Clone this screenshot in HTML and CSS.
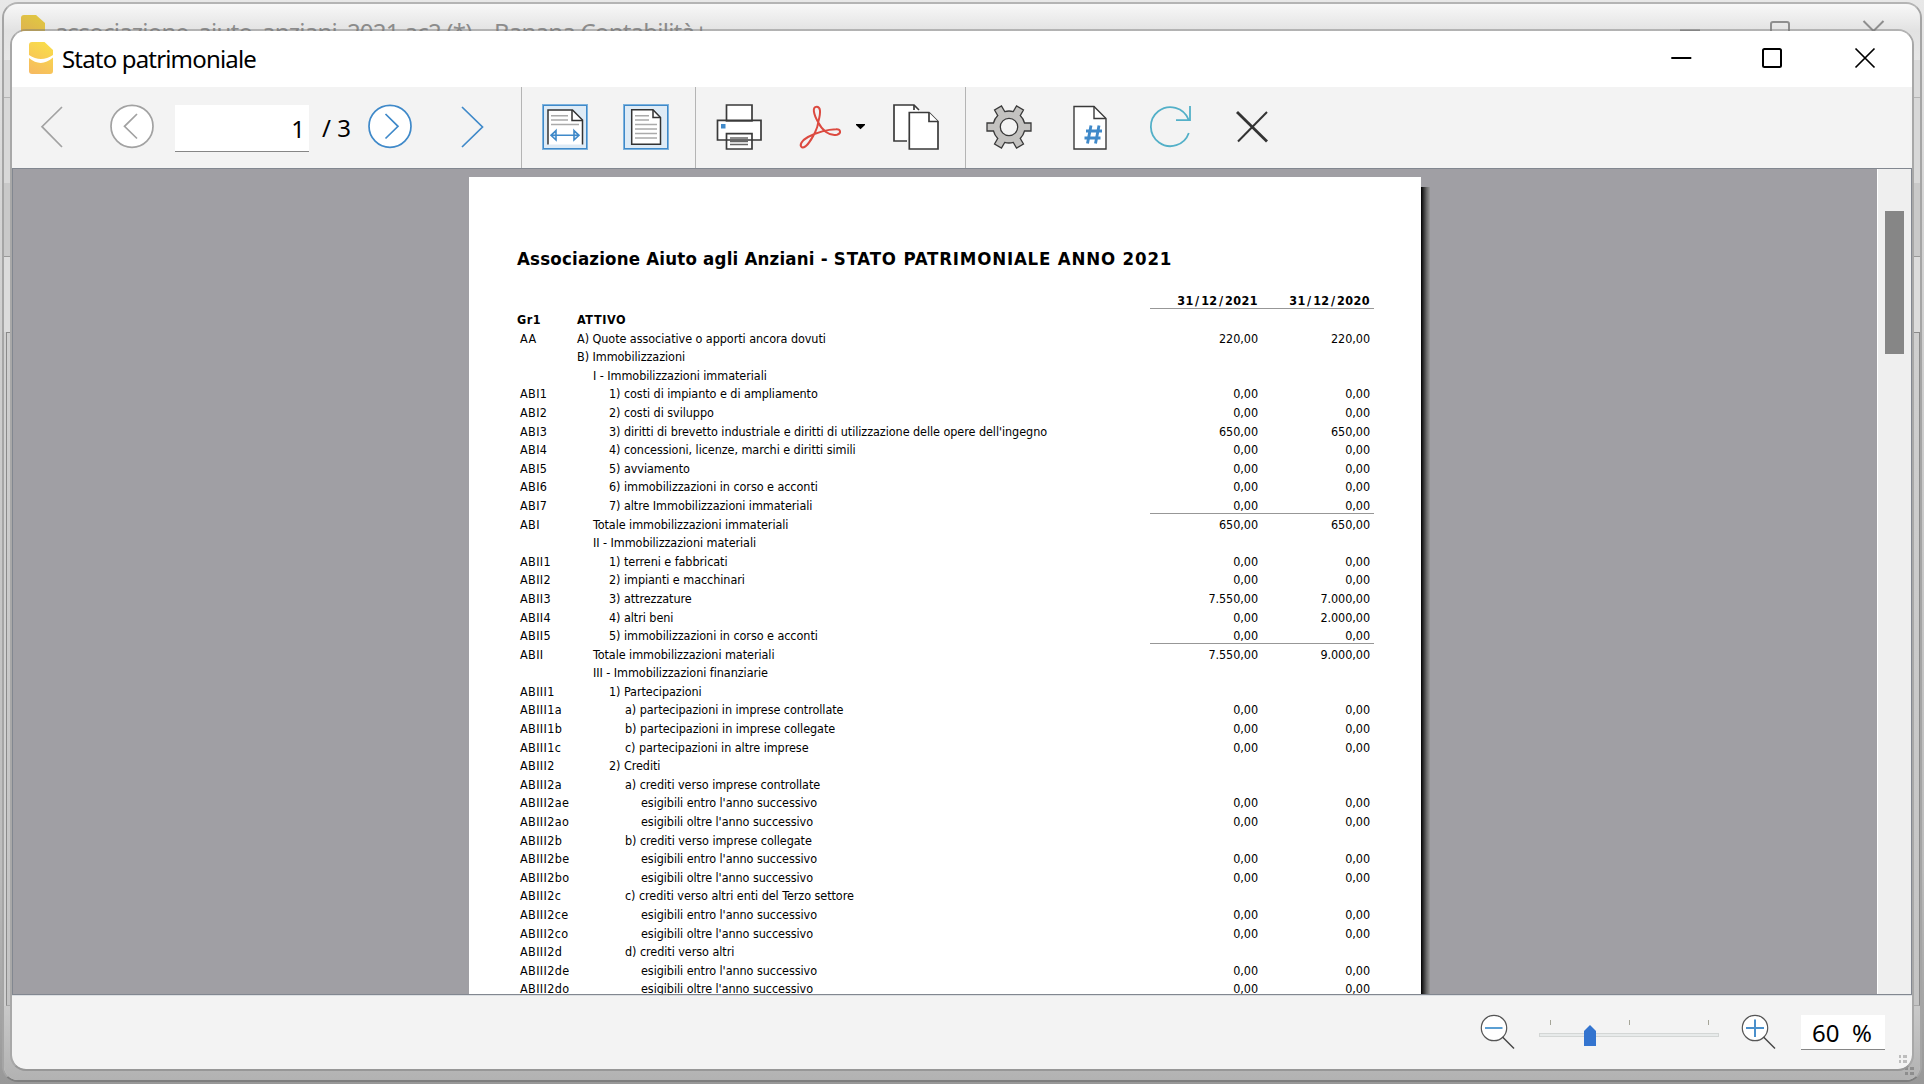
FILE: index.html
```html
<!DOCTYPE html>
<html lang="it">
<head>
<meta charset="utf-8">
<title>Stato patrimoniale</title>
<link rel="stylesheet" href="styles.css">
</head>
<body>
<div class="desktop">
  <div class="back-window">
    <div class="back-title">
      <svg class="back-logo" width="24" height="32" viewBox="0 0 24 32"><path fill="url(#gold)" d="M3 0H15L24 8V29Q24 32 21 32H3Q0 32 0 29V3Q0 0 3 0Z"/></svg>
      <span class="back-text">associazione_aiuto_anziani_2021.ac2 (*) – Banana Contabilità+</span>
      <svg class="back-controls" width="230" height="27" viewBox="1670 4 230 27" fill="none" stroke="#8e8e8e" stroke-width="2"><path d="M1678 30.500H1698M1861.500 21L1871.500 31L1881.500 21"/><rect x="1769" y="22" width="18" height="18" rx="2"/></svg>
    </div>
    <div class="back-menu"></div>
    <div class="back-tools"></div>
    <div class="back-tabs"></div>
    <div class="back-pane"></div>
    <div class="back-table"></div>
    <div class="back-status"><svg width="10" height="10" viewBox="0 0 10 10" fill="#8d8d8d"><path d="M0 1h3v3H0zM5 1h4v3H5zM0 6h3v3H0zM5 6h4v3H5z"/></svg></div>
  </div>

  <main class="window">
    <header class="titlebar">
      <svg class="logo" width="24" height="32" viewBox="0 0 24 32">
        <defs><linearGradient id="gold" x1="0.6" y1="0" x2="0.2" y2="1"><stop offset="0" stop-color="#f9dc4a"/><stop offset="1" stop-color="#f6ba60"/></linearGradient></defs>
        <path fill="url(#gold)" d="M3 0H15.500L24 8V29Q24 32 21 32H3Q0 32 0 29V3Q0 0 3 0Z"/>
        <path fill="#fff" d="M0 13Q12 21 24 13V15.500Q12 26 0 16Z"/>
      </svg>
      <h1 class="caption">Stato patrimoniale</h1>
      <svg class="controls" width="220" height="56" viewBox="1660 31 220 56" fill="none" stroke="#000" stroke-width="2"><path d="M1670.300 58H1690.300"/><rect x="1762" y="49" width="18" height="18" rx="1.500"/><path stroke-width="1.700" d="M1854.500 48.500L1873.500 67.500M1873.500 48.500L1854.500 67.500"/></svg>
    </header>

    <nav class="toolbar">
      <svg class="tb first" viewBox="29 87 46 81"><path class="g" d="M62 107L42 126.700L62 147"/></svg>
      <svg class="tb prev" viewBox="109 87 46 81"><circle class="g" fill="#fff" cx="132" cy="126.300" r="21"/><path class="g" d="M137 114L124.500 126.300L137 138.500"/></svg>
      <input class="page-input" value="1">
      <span class="page-total">/ 3</span>
      <svg class="tb next" viewBox="367 87 46 81"><circle class="b" fill="#fff" cx="390" cy="126.300" r="21"/><path class="b" d="M385.500 114L398 126.300L385.500 138.500"/></svg>
      <svg class="tb last" viewBox="449 87 46 81"><path class="b" d="M462 107L482.500 127L462 147"/></svg>
      <i class="sep s1"></i>
      <svg class="tb fitw" viewBox="542 87 46 81">
        <rect x="543" y="105" width="44" height="44" fill="#deebf6" stroke="#7db2dd" stroke-width="2"/><rect x="543.500" y="105.500" width="43" height="43" fill="none" stroke="#3f89c9"/>
        <path d="M548 144.500V110H572.500L582.500 120V144.500" fill="#fff" stroke="#333" stroke-width="1.500"/><path d="M572 110V120.500H582.500" fill="none" stroke="#333" stroke-width="1.500"/>
        <path d="M551 115.700H568M551 120H568M551 124.500H579" stroke="#aaa" stroke-width="1.500"/>
        <path d="M552 135.300H578M556 130.500L551 135.300L556 140ZM574 130.500L579 135.300L574 140Z" fill="#deebf6" stroke="#3f89c9" stroke-width="1.600"/>
      </svg>
      <svg class="tb fitp" viewBox="623 87 46 81">
        <rect x="624" y="105" width="44" height="44" fill="#deebf6" stroke="#7db2dd" stroke-width="2"/><rect x="624.500" y="105.500" width="43" height="43" fill="none" stroke="#3f89c9"/>
        <path d="M631.700 109.700H653L660.500 117.500V144.300H631.700Z" fill="#fff" stroke="#333" stroke-width="1.500"/><path d="M653 110V117.500H660.500" fill="none" stroke="#333" stroke-width="1.500"/>
        <path d="M635 115.700H649M635 120H649M635 124.500H657M635 129H657M635 133.500H657M635 138H657" stroke="#aaa" stroke-width="1.500"/>
      </svg>
      <i class="sep s2"></i>
      <svg class="tb print" viewBox="716 87 46 81" stroke="#3a3a3a" stroke-width="1.700">
        <path d="M726.500 105H752V121H726.500ZM717.500 120.300H761V140H717.500ZM726.500 133.700H752V149H726.500Z"/><path d="M730 138H748M730 141.300H748M730 144.500H748" stroke="#666"/><path d="M721 124h4.500v4.500H721z" fill="#3f89c9" stroke="none"/>
      </svg>
      <svg class="tb pdf" viewBox="798 87 46 81"><path fill="none" stroke="#dc4a40" stroke-width="2" d="M818.500 121C821 112 820.500 106.700 816.700 106.700C812 106.700 813.500 114 818 122C822 130 829 136.500 837 134.800C841.500 133.500 841 129 836 129.300C829 129.500 817 132.500 808 137C801.500 140.500 799 145.500 802 147.300C806 149 812.500 137.500 815 132.500C817 128.500 818 125 818.500 121Z"/></svg>
      <svg class="tb caret" viewBox="856 87 9 81"><path d="M856 124H865V125L860.500 129.300L856 125Z"/></svg>
      <svg class="tb copy" viewBox="893 87 46 81" stroke="#3a3a3a" stroke-width="1.700">
        <path d="M907 141H894V105H914L919 110" /><path d="M914 105V110"/><path d="M909.300 112.500H929L938 121.500V149H909.300Z"/><path d="M929 112.500V121.500H938"/>
      </svg>
      <i class="sep s3"></i>
      <svg class="tb gear" viewBox="986 87 46 81"><g transform="translate(1009 127)" fill="#c3c2c0" stroke="#3a3a3a" stroke-width="1.300"><path d="M15.500 -4L22 -4V4H15.500A16 16 0 0 1 11.210 11.420L14.460 17.050L7.540 21.050L4.290 15.420A16 16 0 0 1 -4.290 15.420L-7.540 21.050L-14.460 17.050L-11.210 11.420A16 16 0 0 1 -15.500 4H-22V-4H-15.500A16 16 0 0 1 -11.210 -11.420L-14.460 -17.050L-7.540 -21.050L-4.290 -15.420A16 16 0 0 1 4.290 -15.420L7.540 -21.050L14.460 -17.050L11.210 -11.420A16 16 0 0 1 15.500 -4Z"/><circle r="8.700" fill="#f3f3f3"/></g></svg>
      <svg class="tb hash" viewBox="1067 87 46 81"><path d="M1074 106.500H1094L1106 118.500V149H1074Z" fill="#fff" stroke="#3a3a3a" stroke-width="1.400"/><path d="M1094 106.500V118.500H1106" fill="none" stroke="#3a3a3a" stroke-width="1.400"/><path d="M1091 125.500L1087.500 143.500M1099 125.500L1095.500 143.500M1086 131H1102M1084.500 138H1100.500" fill="none" stroke="#3f89c9" stroke-width="2.900"/></svg>
      <svg class="tb refresh" viewBox="1148 87 46 81"><path d="M1188.800 133A19.500 19.500 0 1 1 1188.500 119.500M1190 106V120.200H1176" fill="none" stroke="#53b0c8" stroke-width="1.800"/></svg>
      <svg class="tb close" viewBox="1229 87 46 81"><path d="M1267 112L1238 141.500" stroke="#333" stroke-width="2"/><path d="M1237 112L1267 141.500" stroke="#333" stroke-width="2.800"/></svg>
    </nav>

    <section class="viewport">
      <div class="canvas">
        <div class="sheet-wrap">
        <article class="sheet">
          <h2 class="doc-title">Associazione Aiuto agli Anziani - <span class="doc-kind">STATO PATRIMONIALE ANNO 2021</span></h2>
          <div class="row head"><span></span><span></span><b>31<i>/</i>12<i>/</i>2021</b><b>31<i>/</i>12<i>/</i>2020</b></div>
          <div class="row group ruled"><span>Gr1</span><span>ATTIVO</span><b></b><b></b></div>
          <div class="row"><span>AA</span><span>A) Quote associative o apporti ancora dovuti</span><b>220,00</b><b>220,00</b></div>
          <div class="row"><span></span><span>B) Immobilizzazioni</span><b></b><b></b></div>
          <div class="row"><span></span><span class="i1">I - Immobilizzazioni immateriali</span><b></b><b></b></div>
          <div class="row"><span>ABI1</span><span class="i2">1) costi di impianto e di ampliamento</span><b>0,00</b><b>0,00</b></div>
          <div class="row"><span>ABI2</span><span class="i2">2) costi di sviluppo</span><b>0,00</b><b>0,00</b></div>
          <div class="row"><span>ABI3</span><span class="i2">3) diritti di brevetto industriale e diritti di utilizzazione delle opere dell'ingegno</span><b>650,00</b><b>650,00</b></div>
          <div class="row"><span>ABI4</span><span class="i2">4) concessioni, licenze, marchi e diritti simili</span><b>0,00</b><b>0,00</b></div>
          <div class="row"><span>ABI5</span><span class="i2">5) avviamento</span><b>0,00</b><b>0,00</b></div>
          <div class="row"><span>ABI6</span><span class="i2">6) immobilizzazioni in corso e acconti</span><b>0,00</b><b>0,00</b></div>
          <div class="row"><span>ABI7</span><span class="i2">7) altre Immobilizzazioni immateriali</span><b>0,00</b><b>0,00</b></div>
          <div class="row ruled"><span>ABI</span><span class="i1">Totale immobilizzazioni immateriali</span><b>650,00</b><b>650,00</b></div>
          <div class="row"><span></span><span class="i1">II - Immobilizzazioni materiali</span><b></b><b></b></div>
          <div class="row"><span>ABII1</span><span class="i2">1) terreni e fabbricati</span><b>0,00</b><b>0,00</b></div>
          <div class="row"><span>ABII2</span><span class="i2">2) impianti e macchinari</span><b>0,00</b><b>0,00</b></div>
          <div class="row"><span>ABII3</span><span class="i2">3) attrezzature</span><b>7.550,00</b><b>7.000,00</b></div>
          <div class="row"><span>ABII4</span><span class="i2">4) altri beni</span><b>0,00</b><b>2.000,00</b></div>
          <div class="row"><span>ABII5</span><span class="i2">5) immobilizzazioni in corso e acconti</span><b>0,00</b><b>0,00</b></div>
          <div class="row ruled"><span>ABII</span><span class="i1">Totale immobilizzazioni materiali</span><b>7.550,00</b><b>9.000,00</b></div>
          <div class="row"><span></span><span class="i1">III - Immobilizzazioni finanziarie</span><b></b><b></b></div>
          <div class="row"><span>ABIII1</span><span class="i2">1) Partecipazioni</span><b></b><b></b></div>
          <div class="row"><span>ABIII1a</span><span class="i3">a) partecipazioni in imprese controllate</span><b>0,00</b><b>0,00</b></div>
          <div class="row"><span>ABIII1b</span><span class="i3">b) partecipazioni in imprese collegate</span><b>0,00</b><b>0,00</b></div>
          <div class="row"><span>ABIII1c</span><span class="i3">c) partecipazioni in altre imprese</span><b>0,00</b><b>0,00</b></div>
          <div class="row"><span>ABIII2</span><span class="i2">2) Crediti</span><b></b><b></b></div>
          <div class="row"><span>ABIII2a</span><span class="i3">a) crediti verso imprese controllate</span><b></b><b></b></div>
          <div class="row"><span>ABIII2ae</span><span class="i4">esigibili entro l'anno successivo</span><b>0,00</b><b>0,00</b></div>
          <div class="row"><span>ABIII2ao</span><span class="i4">esigibili oltre l'anno successivo</span><b>0,00</b><b>0,00</b></div>
          <div class="row"><span>ABIII2b</span><span class="i3">b) crediti verso imprese collegate</span><b></b><b></b></div>
          <div class="row"><span>ABIII2be</span><span class="i4">esigibili entro l'anno successivo</span><b>0,00</b><b>0,00</b></div>
          <div class="row"><span>ABIII2bo</span><span class="i4">esigibili oltre l'anno successivo</span><b>0,00</b><b>0,00</b></div>
          <div class="row"><span>ABIII2c</span><span class="i3">c) crediti verso altri enti del Terzo settore</span><b></b><b></b></div>
          <div class="row"><span>ABIII2ce</span><span class="i4">esigibili entro l'anno successivo</span><b>0,00</b><b>0,00</b></div>
          <div class="row"><span>ABIII2co</span><span class="i4">esigibili oltre l'anno successivo</span><b>0,00</b><b>0,00</b></div>
          <div class="row"><span>ABIII2d</span><span class="i3">d) crediti verso altri</span><b></b><b></b></div>
          <div class="row"><span>ABIII2de</span><span class="i4">esigibili entro l'anno successivo</span><b>0,00</b><b>0,00</b></div>
          <div class="row"><span>ABIII2do</span><span class="i4">esigibili oltre l'anno successivo</span><b>0,00</b><b>0,00</b></div>
        </article>
        <div class="sheet-shadow"></div>
        </div>
      </div>
      <div class="scrollbar"><div class="thumb"></div></div>
    </section>

    <footer class="zoombar">
      <svg class="zoom-icon" width="36" height="73" viewBox="1480 996 36 73"><circle cx="1494" cy="1028" r="12.700" fill="#fff" stroke="#555" stroke-width="1.200"/><path d="M1502.500 1037L1514 1048.500" stroke="#444" stroke-width="1.400"/><path d="M1485 1028H1502.500" stroke="#5b9fd3" stroke-width="2"/></svg>
      <svg class="slider" width="180" height="73" viewBox="1539 996 180 73"><path d="M1550.500 1020V1025M1629.500 1020V1025M1708.500 1020V1025" stroke="#a5a598"/><rect x="1539.500" y="1033.500" width="179" height="3" fill="#e7eaea" stroke="#d3d6d5"/><path d="M1584 1046V1031L1590 1025L1596 1031V1046Z" fill="#3374cf"/></svg>
      <svg class="zoom-icon plus" width="36" height="73" viewBox="1740 996 36 73"><circle cx="1754" cy="1028" r="12.700" fill="#fff" stroke="#555" stroke-width="1.200"/><path d="M1762.500 1037L1774 1048.500" stroke="#444" stroke-width="1.400"/><path d="M1745 1028H1763M1754 1019.500V1037" stroke="#4a90cc" stroke-width="2"/></svg>
      <div class="percent"><span>60</span><span>%</span></div>
      <svg class="grip" width="10" height="10" viewBox="0 0 10 10" fill="#bdbdbd"><path d="M0 1h2v3H0zM4 1h4v3H4zM0 6h2v3H0zM4 6h4v3H4z"/></svg>
    </footer>
  </main>
</div>
</body>
</html>
```
FILE: styles.css
```css
* { box-sizing: border-box; }
body { margin: 0; width: 1924px; height: 1084px; overflow: hidden; font-family: "Noto Sans", sans-serif; color: #000; }
svg { display: block; flex: none; }
.desktop { position: relative; width: 1924px; height: 1084px; background: linear-gradient(#e8e8e8, #d4d4d4 20%, #bcbcbc 80%, #989898); }

/* main application window behind the preview */
.back-window { position: absolute; left: 2px; top: 2px; width: 1920px; height: 1080px; border: 2px solid #a5a5a5; border-top-color: #b4b4b4; border-bottom-color: #7e7e7e; border-radius: 16px; overflow: hidden; display: flex; flex-direction: column; background: #d0d0d0; }
.back-title { height: 56px; display: flex; align-items: flex-start; padding-left: 17px; background: linear-gradient(#f8f8f8, #e2e2e2 27px, #e6e6e6); flex: none; }
.back-logo { margin-top: 11px; filter: brightness(.9); }
.back-text { margin-left: 10px; margin-top: 10px; font-size: 24px; line-height: 36px; letter-spacing: -0.76px; color: #8c8c8c; white-space: nowrap; }
.back-controls { margin-left: auto; margin-right: 18px; }
.back-menu { height: 38px; background: #dadada; border-bottom: 1px solid #b5b5b5; flex: none; }
.back-tools { height: 85px; background: #d8d8d8; flex: none; }
.back-tabs { height: 74px; background: #c9c9c9; border-bottom: 1px solid #999; flex: none; }
.back-pane { height: 75px; background: #dcdcdc; flex: none; }
.back-table { height: 674px; margin: 0 0 0 2px; border: 1px solid #8a8a8a; border-bottom-color: #a8a8a8; background: linear-gradient(#cfcfcf, #c4c4c4); flex: none; }
.back-status { flex: 1; background: linear-gradient(#c9c9c9, #b2b2b2); display: flex; justify-content: flex-end; align-items: flex-end; padding: 0 5px 4px; }

/* preview window */
.window { position: absolute; left: 10px; top: 29px; width: 1904px; height: 1042px; border: 2px solid #a8a8a8; border-top-color: rgba(120, 120, 120, .45); border-bottom-color: #979797; border-radius: 16px; overflow: hidden; display: flex; flex-direction: column; background: #f3f3f3; background-clip: padding-box; }
.titlebar { height: 56px; flex: none; background: #fff; display: flex; align-items: center; padding: 0 31px 0 17px; }
.logo { margin-top: -2px; }
.caption { margin: 0 0 0 9px; font-size: 24px; font-weight: 400; line-height: 56px; letter-spacing: -0.83px; }
.controls { margin-left: auto; }

.toolbar { height: 81px; flex: none; display: flex; align-items: center; padding-left: 17px; background: #f3f3f3; }
.tb { width: 46px; height: 81px; fill: none; }
.g { stroke: #a2a2a2; stroke-width: 1.7; }
.b { stroke: #3f89c9; stroke-width: 1.7; }
.prev { margin-left: 34px; }
.page-input { width: 134px; height: 48px; margin: 0 0 0 20px; border: 1px solid #f3f3f3; border-width: 1px 0; border-bottom-color: #868686; background: #fff; text-align: right; font: 24px "Noto Sans", sans-serif; padding: 1px 4px 0 0; border-radius: 0; outline: 0; }
.page-total { width: 58px; padding-left: 13px; font-size: 24px; line-height: 40px; padding-top: 1px; white-space: nowrap; }
.last { margin-left: 36px; }
.sep { width: 1px; height: 81px; background: #b4b4b4; flex: none; }
.s1 { margin-left: 26px; }
.fitw { margin-left: 20px; }
.fitp { margin-left: 35px; }
.s2 { margin-left: 26px; }
.print { margin-left: 20px; }
.pdf { margin-left: 36px; }
.caret { width: 9px; margin-left: 12px; fill: #000; }
.copy { margin-left: 28px; }
.s3 { margin-left: 26px; }
.gear { margin-left: 20px; }
.hash, .refresh, .close { margin-left: 35px; }
.print, .copy { fill: #fff; }

.viewport { height: 827px; flex: none; display: flex; border: 1px solid #828790; background: #a09fa4; overflow: hidden; }
.canvas { width: 1864px; flex: none; overflow: hidden; padding: 8px 0 0 456px; }
.sheet-wrap { display: flex; width: 961px; height: 817px; }
.sheet { width: 952px; flex: none; background: #fff; padding-left: 48px; overflow: hidden; font-family: "DejaVu Sans Condensed", "DejaVu Sans", sans-serif; font-size: 12.5px; }
.sheet-shadow { width: 9px; margin-top: 10px; background: linear-gradient(90deg, #000, #222 20%, #666 60%, #999); }
.doc-title { margin: 0; height: 112.42px; padding-top: 62px; line-height: 40px; font-size: 18.5px; font-weight: 700; letter-spacing: 0.2px; white-space: nowrap; }
.doc-kind { letter-spacing: 0.82px; }
.row { display: grid; grid-template-columns: 60px 573px 112px 112px; height: 18.6px; line-height: 24px; white-space: nowrap; letter-spacing: -0.06px; }
.row span:first-child { padding-left: 3px; letter-spacing: 0.38px; }
.row b { font-weight: 400; text-align: right; padding-right: 4px; height: 18.6px; }
.row.head b { font-weight: 700; letter-spacing: 0.4px; }
.row.head i { font-style: normal; margin: 0 1.5px; }
.row.group span { font-weight: 700; letter-spacing: 0.6px; }
.row.group span:first-child { padding-left: 0; letter-spacing: 0.5px; }
.ruled b { box-shadow: inset 0 1px #979797; }
.i1 { padding-left: 16px; }
.i2 { padding-left: 32px; }
.i3 { padding-left: 48px; }
.i4 { padding-left: 64px; }

.scrollbar { flex: 1; background: #efefef; border-left: 1px solid #fff; padding: 42px 6px 0 7px; }
.thumb { width: 19px; height: 143px; background: #868686; }

.zoombar { flex: 1; display: flex; align-items: center; border-top: 1px solid #dcdfe2; padding-left: 1468px; }
.slider { margin-left: 23px; }
.plus { margin-left: 22px; }
.percent { width: 84px; height: 35px; margin-left: 24px; display: flex; justify-content: space-between; padding: 1px 13px 0 11px; background: #fff; border-bottom: 1px solid #868686; font-size: 24px; line-height: 34px; }
.grip { margin-left: 14px; margin-top: 52px; }
```
